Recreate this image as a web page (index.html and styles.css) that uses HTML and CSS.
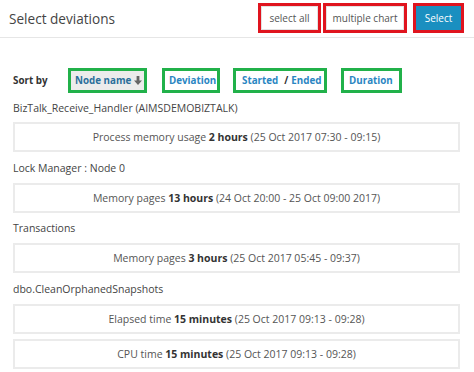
FILE: index.html
```html
<!DOCTYPE html>
<html>
<head>
<meta charset="utf-8">
<link rel="stylesheet" href="styles.css">
</head>
<body>
<div class="header">
  <h1 class="title">Select deviations</h1>
  <div class="actions">
    <span class="mark mark-red"><button class="btn btn-light btn-all">select all</button></span>
    <span class="mark mark-red"><button class="btn btn-light btn-multi">multiple chart</button></span>
    <span class="mark mark-red"><button class="btn btn-primary">Select</button></span>
  </div>
</div>
<div class="content">
  <div class="sortbar">
    <span class="sort-label">Sort by</span>
    <span class="mark mark-green sort-node"><a class="sort-link active">Node name <svg class="arrow" width="8" height="9" viewBox="0 0 8 9"><path d="M2.6 0h2.8v4.4H8L4 9 0 4.4h2.6z" fill="#666"/></svg></a></span>
    <span class="mark mark-green sort-dev"><a class="sort-link">Deviation</a></span>
    <span class="mark mark-green sort-se"><a class="sort-link">Started <span class="slash">/</span> Ended</a></span>
    <span class="mark mark-green sort-dur"><a class="sort-link">Duration</a></span>
  </div>

  <div class="group-label first">BizTalk_Receive_Handler (AIMSDEMOBIZTALK)</div>
  <div class="item">Process memory usage <b>2 hours</b> (25 Oct 2017 07:30 - 09:15)</div>

  <div class="group-label">Lock Manager : Node 0</div>
  <div class="item">Memory pages <b>13 hours</b> (24 Oct 20:00 - 25 Oct 09:00 2017)</div>

  <div class="group-label">Transactions</div>
  <div class="item">Memory pages <b>3 hours</b> (25 Oct 2017 05:45 - 09:37)</div>

  <div class="group-label">dbo.CleanOrphanedSnapshots</div>
  <div class="item">Elapsed time <b>15 minutes</b> (25 Oct 2017 09:13 - 09:28)</div>
  <div class="item">CPU time <b>15 minutes</b> (25 Oct 2017 09:13 - 09:28)</div>
</div>
</body>
</html>
```
FILE: styles.css
```css
* { box-sizing: border-box; }
html, body { margin: 0; padding: 0; background: #fff; }
body {
  font-family: "Open Sans", "Liberation Sans", sans-serif;
  font-size: 10.5px;
  color: #555;
  width: 474px;
  height: 372px;
  overflow: hidden;
}
.header {
  height: 38px;
  display: flex;
  align-items: center;
  justify-content: space-between;
  padding: 0 10px 0 9px;
  border-bottom: 1px solid #e6e6e6;
}
.title {
  margin: 0;
  font-size: 13.6px;
  font-weight: 400;
  color: #444;
}
.actions {
  display: flex;
  gap: 2px;
  margin-top: -2px;
}
.actions .mark:last-child { margin-left: 4px; }
.mark { display: inline-flex; }
.mark-red { border: 3px solid #e0141e; height: 30px; }
.mark-green { border: 3px solid #21b14a; height: 25px; }
.btn {
  font-family: inherit;
  font-size: 10px;
  border: 1px solid #e2e2e2;
  margin: 0;
  padding: 0;
  height: 24px;
  cursor: pointer;
}
.btn-light { background: #fff; color: #555; }
.btn-all { width: 57px; }
.btn-multi { width: 78px; }
.btn-primary {
  background: #1a8fc0;
  border-color: #1a8fc0;
  color: #fff;
  width: 45px;
}
.content { padding: 0 14px 0 13px; }
.sortbar {
  display: flex;
  align-items: center;
  margin-top: 30px;
  height: 25px;
}
.sort-label {
  font-weight: 700;
  color: #333;
  font-size: 9.8px;
  width: 55px;
}
.sort-link {
  display: flex;
  align-items: center;
  white-space: nowrap;
  font-weight: 700;
  font-size: 9.8px;
  color: #2a86c2;
  padding: 0 0 0 4px;
  width: 100%;
  height: 100%;
}
.sort-link.active { background: #ececec; color: #2b6f9b; }
.sort-node { width: 79px; margin-right: 15px; }
.sort-dev { width: 58px; margin-right: 13px; }
.sort-se { width: 94px; margin-right: 14px; }
.sort-se .sort-link { padding-left: 6px; }
.sort-dur { width: 61px; }
.sort-dur .sort-link { padding-left: 5px; }
.sort-se .slash { color: #333; margin: 0 3px 0 6px; }
.arrow { margin-left: 3px; }
.group-label {
  height: 30px;
  display: flex;
  align-items: center;
  color: #444;
}
.group-label.first { height: 29px; }
.item {
  height: 30px;
  display: flex;
  align-items: center;
  justify-content: center;
  white-space: pre;
  border: 2px solid #ebebeb;
  color: #555;
  margin-bottom: 5px;
}
.item + .group-label { margin-top: -4.5px; }
.item b { color: #333; font-weight: 700; }
```
